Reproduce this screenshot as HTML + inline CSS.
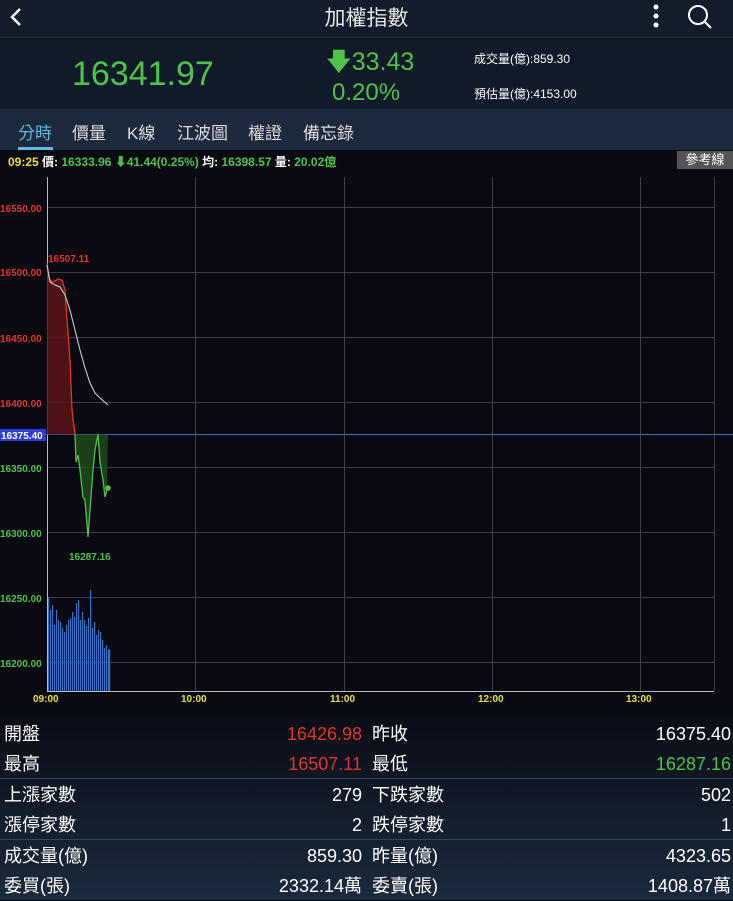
<!DOCTYPE html>
<html><head><meta charset="utf-8"><style>
*{margin:0;padding:0;box-sizing:border-box}
body{width:733px;height:900px;overflow:hidden;background:#0a0b12;font-family:"Liberation Sans","Noto Sans CJK TC",sans-serif;color:#fff;position:relative}
.abs{position:absolute;white-space:nowrap}
#hdr{position:absolute;left:0;top:0;width:733px;height:38px;background:#121c2b;border-bottom:1px solid #24304a}
#quote{position:absolute;left:0;top:39px;width:733px;height:70px;background:#111a29}
#tabs{position:absolute;left:0;top:109px;width:733px;height:41px;background:#1d2a3e}
#info{position:absolute;left:0;top:150px;width:733px;height:20px;background:#0a0b12}
#bot{position:absolute;left:0;top:712px;width:733px;height:188px;background:linear-gradient(#0a0c14,#1b2a3e)}
.g{color:#4fc24a}.r{color:#e0362c}
.row{position:absolute;left:0;width:733px;height:30px;font-size:18px;line-height:30px}
.row span{position:absolute}
.sep{position:absolute;left:0;width:733px;height:1px;background:#2a4a6a}
</style></head><body>
<div id="hdr">
<svg class="abs" style="left:8px;top:6px" width="16" height="22"><path d="M12 3 L4 11 L12 19" stroke="#fff" stroke-width="2.5" fill="none"/></svg>
<div class="abs" style="left:0;width:733px;text-align:center;top:2px;font-size:21px;color:#e8e8e8">加權指數</div>
<svg class="abs" style="left:650px;top:3px" width="12" height="26"><circle cx="6" cy="4" r="2.5" fill="#fff"/><circle cx="6" cy="13" r="2.5" fill="#fff"/><circle cx="6" cy="22" r="2.5" fill="#fff"/></svg>
<svg class="abs" style="left:686px;top:3px" width="28" height="28"><circle cx="12" cy="12" r="9" stroke="#fff" stroke-width="2" fill="none"/><path d="M18.5 18.5 L25 25" stroke="#fff" stroke-width="2"/></svg>
</div>
<div id="quote">
<div class="abs g" style="left:72px;top:16px;font-size:34px">16341.97</div>
<div class="abs g" style="left:326px;top:4px;font-size:25px">🡇33.43</div>
<div class="abs g" style="left:332px;top:40px;font-size:24px">0.20%</div>
<div class="abs" style="left:474px;top:11px;font-size:12px">成交量(億):859.30</div>
<div class="abs" style="left:474px;top:46px;font-size:12px">預估量(億):4153.00</div>
</div>
<div id="tabs">
<div class="abs" style="left:18px;top:10px;font-size:17px;color:#5fb8e0">分時</div>
<div class="abs" style="left:18px;top:38px;width:35px;height:3px;background:#5fb8e0"></div>
<div class="abs" style="left:72px;top:10px;font-size:17px;color:#ddd">價量</div>
<div class="abs" style="left:127px;top:10px;font-size:17px;color:#ddd">K線</div>
<div class="abs" style="left:177px;top:10px;font-size:17px;color:#ddd">江波圖</div>
<div class="abs" style="left:248px;top:10px;font-size:17px;color:#ddd">權證</div>
<div class="abs" style="left:303px;top:10px;font-size:17px;color:#ddd">備忘錄</div>
</div>
<div id="info">
<div class="abs" style="left:8px;top:3px;font-size:12px;font-weight:bold"><span style="color:#e8e040">09:25</span> 價: <span class="g">16333.96 ⬇41.44(0.25%)</span> 均: <span class="g">16398.57</span> 量: <span class="g">20.02億</span></div>
<div class="abs" style="left:677px;top:1px;width:56px;height:18px;background:#555;color:#fff;font-size:13px;text-align:center;line-height:18px">參考線</div>
</div>
<svg class="abs" style="left:0;top:170px" width="733" height="542">
<g transform="translate(0,-170)" font-family="Liberation Sans" font-size="10" font-weight="bold">
<g stroke="#3a3f4c" stroke-width="1">
<line x1="47" y1="207.5" x2="714" y2="207.5"/><line x1="47" y1="272.5" x2="714" y2="272.5"/><line x1="47" y1="337.5" x2="714" y2="337.5"/><line x1="47" y1="402.5" x2="714" y2="402.5"/><line x1="47" y1="467.5" x2="714" y2="467.5"/><line x1="47" y1="532.5" x2="714" y2="532.5"/><line x1="47" y1="597.5" x2="714" y2="597.5"/><line x1="47" y1="662.5" x2="714" y2="662.5"/>
<line x1="195.5" y1="177" x2="195.5" y2="691"/><line x1="344.5" y1="177" x2="344.5" y2="691"/><line x1="492.5" y1="177" x2="492.5" y2="691"/><line x1="640.5" y1="177" x2="640.5" y2="691"/><line x1="714.5" y1="177" x2="714.5" y2="691"/>
</g>
<line x1="47.5" y1="177" x2="47.5" y2="691" stroke="#bbb"/>
<line x1="47" y1="691.5" x2="714" y2="691.5" stroke="#bbb"/>
<line x1="0" y1="434.5" x2="733" y2="434.5" stroke="#3d6aa8"/>
<g fill="#3a6fc0">
<rect x="48" y="597" width="1.2" height="94"/><rect x="50" y="610" width="1.2" height="81"/><rect x="52" y="605" width="1.2" height="86"/><rect x="54" y="625" width="1.2" height="66"/><rect x="56" y="610" width="1.2" height="81"/><rect x="58" y="620" width="1.2" height="71"/><rect x="60" y="622" width="1.2" height="69"/><rect x="62" y="628" width="1.2" height="63"/><rect x="64" y="632" width="1.2" height="59"/><rect x="66" y="625" width="1.2" height="66"/><rect x="68" y="620" width="1.2" height="71"/><rect x="70" y="618" width="1.2" height="73"/><rect x="72" y="612" width="1.2" height="79"/><rect x="74" y="617" width="1.2" height="74"/><rect x="76" y="603" width="1.2" height="88"/><rect x="78" y="600" width="1.2" height="91"/><rect x="80" y="620" width="1.2" height="71"/><rect x="82" y="612" width="1.2" height="79"/><rect x="84" y="620" width="1.2" height="71"/><rect x="86" y="626" width="1.2" height="65"/><rect x="88" y="618" width="1.2" height="73"/><rect x="90" y="590" width="1.2" height="101"/><rect x="92" y="628" width="1.2" height="63"/><rect x="94" y="622" width="1.2" height="69"/><rect x="96" y="635" width="1.2" height="56"/><rect x="98" y="630" width="1.2" height="61"/><rect x="100" y="632" width="1.2" height="59"/><rect x="102" y="640" width="1.2" height="51"/><rect x="104" y="648" width="1.2" height="43"/><rect x="106" y="645" width="1.2" height="46"/><rect x="108" y="650" width="1.2" height="41"/><rect x="109" y="649" width="1.2" height="42"/>
</g>
<path d="M47 263 L49 278 L52 282 L55 281 L58 279 L62 280 L65 290 L67 320 L70 360 L72 410 L75 434.5 L47 434.5Z" fill="#5a1515" opacity="0.85"/>
<path d="M47 263 L49 278 L52 282 L55 281 L58 279 L62 280 L65 290 L67 320 L70 360 L72 410 L75 434.5" stroke="#e0362c" stroke-width="1.3" fill="none"/>
<path d="M75 434.5 L76 462 L78 455 L80 470 L83 497 L85 500 L88 537 L90 510 L93 470 L95 450 L98 434.5 L100 462 L103 480 L105 497 L107 490 L108 434.5Z" fill="#1f4a1c" opacity="0.85"/>
<path d="M75 434.5 L76 462 L78 455 L80 470 L83 497 L85 500 L88 537 L90 510 L93 470 L95 450 L98 434.5 L100 462 L103 480 L105 497 L107 490 L108 488" stroke="#4fc24a" stroke-width="1.3" fill="none"/>
<circle cx="108" cy="488" r="2.8" fill="#4fc24a"/>
<path d="M47 265 L50 282 L55 285 L60 287 L65 295 L70 310 L75 330 L80 350 L85 368 L90 383 L95 393 L100 398 L108 405" stroke="#ccc" stroke-width="1.1" fill="none"/>
<g fill="#e0362c"><text x="0" y="212">16550.00</text><text x="0" y="276">16500.00</text><text x="0" y="342">16450.00</text><text x="0" y="407">16400.00</text><text x="48" y="262">16507.11</text></g>
<rect x="0" y="429" width="46" height="12" fill="#2b3bdc"/>
<text x="1" y="439" fill="#fff">16375.40</text>
<g fill="#4fc24a"><text x="0" y="472">16350.00</text><text x="0" y="537">16300.00</text><text x="0" y="602">16250.00</text><text x="0" y="667">16200.00</text><text x="69" y="560">16287.16</text></g>
<g fill="#e8e040"><text x="33" y="702">09:00</text><text x="181" y="702">10:00</text><text x="330" y="702">11:00</text><text x="478" y="702">12:00</text><text x="626" y="702">13:00</text></g>
</g></svg>
<div id="bot"></div>
<div class="row" style="top:719px"><span style="left:4px">開盤</span><span class="r" style="right:371px">16426.98</span><span style="left:372px">昨收</span><span style="right:2px">16375.40</span></div>
<div class="row" style="top:749px"><span style="left:4px">最高</span><span class="r" style="right:371px">16507.11</span><span style="left:372px">最低</span><span class="g" style="right:2px">16287.16</span></div>
<div class="sep" style="top:778px"></div>
<div class="row" style="top:780px"><span style="left:4px">上漲家數</span><span style="right:371px">279</span><span style="left:372px">下跌家數</span><span style="right:2px">502</span></div>
<div class="row" style="top:810px"><span style="left:4px">漲停家數</span><span style="right:371px">2</span><span style="left:372px">跌停家數</span><span style="right:2px">1</span></div>
<div class="sep" style="top:839px"></div>
<div class="row" style="top:841px"><span style="left:4px">成交量(億)</span><span style="right:371px">859.30</span><span style="left:372px">昨量(億)</span><span style="right:2px">4323.65</span></div>
<div class="row" style="top:871px"><span style="left:4px">委買(張)</span><span style="right:371px">2332.14萬</span><span style="left:372px">委賣(張)</span><span style="right:2px">1408.87萬</span></div>
</body></html>
